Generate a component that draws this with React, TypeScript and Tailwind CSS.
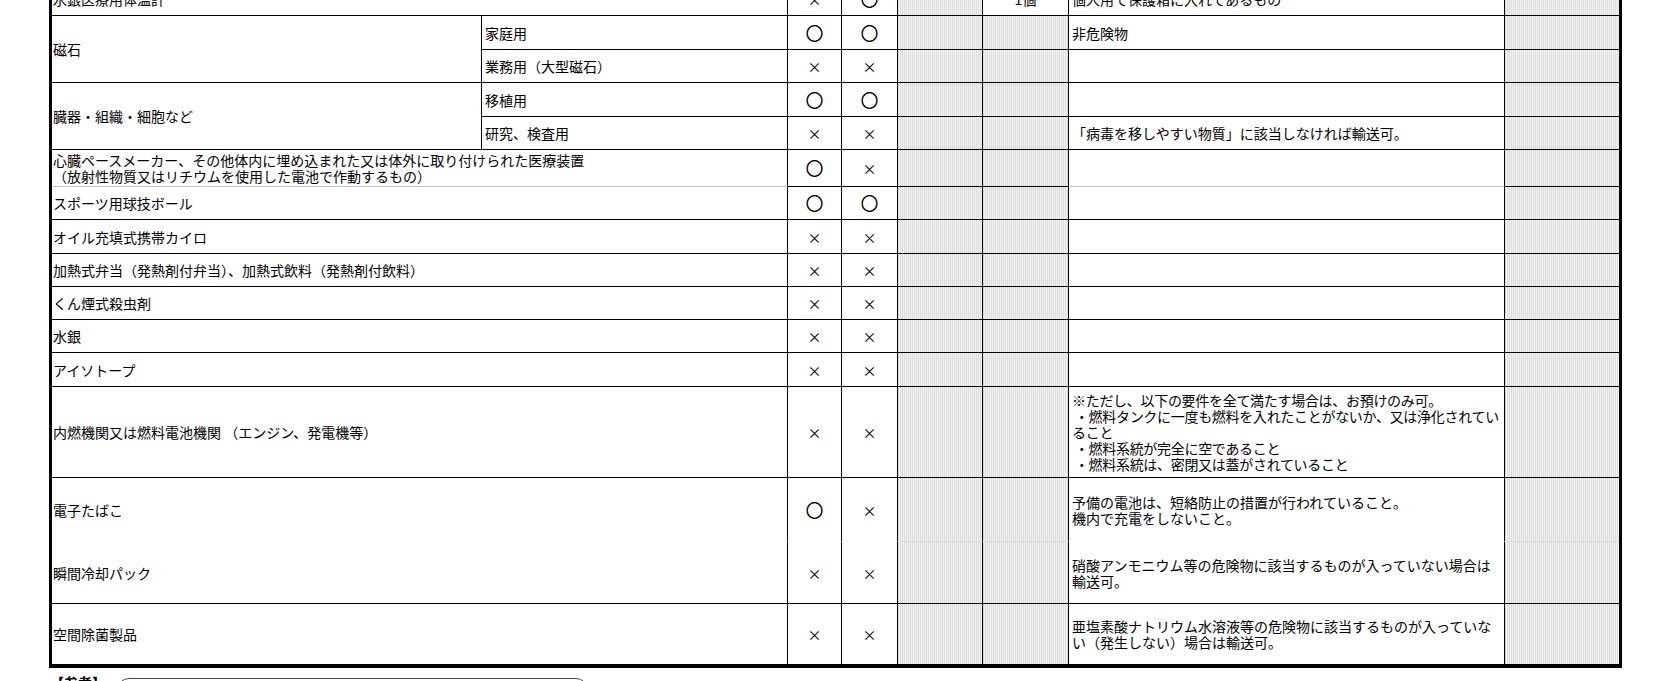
import { Fragment } from "react";
import clsx from "clsx";

type Edge = "solid" | "light" | "open";

type Row = {
  item?: string;
  sub?: string;
  marks: [string, string];
  count?: string;
  note?: string;
  dotted?: boolean;
  edge?: Edge;
  tight?: boolean;
};

const ROWS: Row[] = [
  { item: "水銀医療用体温計", marks: ["×", "○"], count: "1個", note: "個人用で保護箱に入れてあるもの", dotted: true },
  { item: "磁石", sub: "家庭用", marks: ["○", "○"], note: "非危険物", dotted: true },
  { sub: "業務用（大型磁石）", marks: ["×", "×"], dotted: true },
  { item: "臓器・組織・細胞など", sub: "移植用", marks: ["○", "○"], dotted: true },
  { sub: "研究、検査用", marks: ["×", "×"], note: "「病毒を移しやすい物質」に該当しなければ輸送可。", dotted: true },
  {
    item: "心臓ペースメーカー、その他体内に埋め込まれた又は体外に取り付けられた医療装置\n（放射性物質又はリチウムを使用した電池で作動するもの）",
    marks: ["○", "×"],
    dotted: true,
    edge: "light",
  },
  { item: "スポーツ用球技ボール", marks: ["○", "○"], dotted: true },
  { item: "オイル充填式携帯カイロ", marks: ["×", "×"], dotted: true },
  { item: "加熱式弁当（発熱剤付弁当）、加熱式飲料（発熱剤付飲料）", marks: ["×", "×"] },
  { item: "くん煙式殺虫剤", marks: ["×", "×"] },
  { item: "水銀", marks: ["×", "×"] },
  { item: "アイソトープ", marks: ["×", "×"] },
  {
    item: "内燃機関又は燃料電池機関 （エンジン、発電機等）",
    marks: ["×", "×"],
    note:
      "※ただし、以下の要件を全て満たす場合は、お預けのみ可。\n ・燃料タンクに一度も燃料を入れたことがないか、又は浄化されてい\nること\n ・燃料系統が完全に空であること\n ・燃料系統は、密閉又は蓋がされていること",
    tight: true,
  },
  {
    item: "電子たばこ",
    marks: ["○", "×"],
    note: "予備の電池は、短絡防止の措置が行われていること。\n機内で充電をしないこと。",
    edge: "open",
  },
  {
    item: "瞬間冷却パック",
    marks: ["×", "×"],
    note: "硝酸アンモニウム等の危険物に該当するものが入っていない場合は\n輸送可。",
  },
  {
    item: "空間除菌製品",
    marks: ["×", "×"],
    note: "亜塩素酸ナトリウム水溶液等の危険物に該当するものが入っていな\nい（発生しない）場合は輸送可。",
  },
];

const SHADE_DOT = "bg-[image:repeating-linear-gradient(90deg,#dedede_0_1px,#f2f2f2_1px_2px)]";
const SHADE_LINE = "bg-[image:repeating-linear-gradient(90deg,#dadada_0_1px,#f4f4f4_1px_2px)]";

// bottom rule of a cell; "open" rows run into the next one
function bottom(edge: Edge | undefined, kind: "plain" | "mark" | "shade") {
  if (edge === "open") return kind === "shade" ? "border-b border-b-[#dadada]" : "border-b border-b-white";
  if (edge === "light" && kind === "plain") return "border-b border-b-[#c2c2c2]";
  return "border-b border-b-black";
}

function Mark({ value }: { value: string }) {
  if (value === "○")
    return <span className="text-[17px] leading-[16px] [-webkit-text-stroke:0.6px_#000]">○</span>;
  return <span>{value}</span>;
}

export default function App() {
  return (
    <div className="h-screen overflow-hidden bg-white font-['Noto_Sans_CJK_JP',sans-serif] text-[14px] leading-[16px] text-black">
      <div className="-mt-[17px] ml-[49px] w-[1573px] border-x-[3px] border-b-[3px] border-black">
        <div className="grid grid-cols-[430px_306px_54px_56px_85px_86px_436px_114px] grid-rows-[33px_34px_33px_34px_33px_37px_33px_34px_33px_33px_33px_34px_91px_64px_62px_61px]">
          {ROWS.map((r, i) => {
            const shade = r.dotted ? SHADE_DOT : SHADE_LINE;
            return (
              <Fragment key={i}>
                {r.item !== undefined && (
                  <div
                    className={clsx(
                      "flex items-center whitespace-pre pl-[1px] border-r border-r-black",
                      r.sub ? "row-span-2" : "col-span-2",
                      bottom(r.sub ? ROWS[i + 1].edge : r.edge, "plain")
                    )}
                  >
                    {r.item}
                  </div>
                )}
                {r.sub !== undefined && (
                  <div className={clsx("flex items-center pl-[3px] border-r border-r-black", bottom(r.edge, "plain"))}>
                    {r.sub}
                  </div>
                )}
                {r.marks.map((m, j) => (
                  <div
                    key={j}
                    className={clsx("flex items-center justify-center border-r border-r-black", bottom(r.edge, "mark"))}
                  >
                    <Mark value={m} />
                  </div>
                ))}
                <div className={clsx("border-r border-r-black", shade, bottom(r.edge, "shade"))} />
                {r.count ? (
                  <div className="flex items-center justify-center border-r border-r-black border-b border-b-black">
                    {r.count}
                  </div>
                ) : (
                  <div className={clsx("border-r border-r-black", shade, bottom(r.edge, "shade"))} />
                )}
                <div
                  className={clsx(
                    "flex items-center whitespace-pre pl-[3px] border-r border-r-black",
                    r.tight && "tracking-[-0.3px]",
                    bottom(r.edge, "plain")
                  )}
                >
                  {r.note}
                </div>
                <div className={clsx(shade, bottom(r.edge, "shade"))} />
              </Fragment>
            );
          })}
        </div>
      </div>

      {/* 参考 box, only its top edge is in view */}
      <div className="ml-[50px] mt-[6px] flex items-start">
        <span className="w-[67px] shrink-0 font-bold">【参考】</span>
        <div className="mt-[4px] h-[40px] w-[471px] rounded-[12px] border border-[#444]" />
      </div>
    </div>
  );
}
